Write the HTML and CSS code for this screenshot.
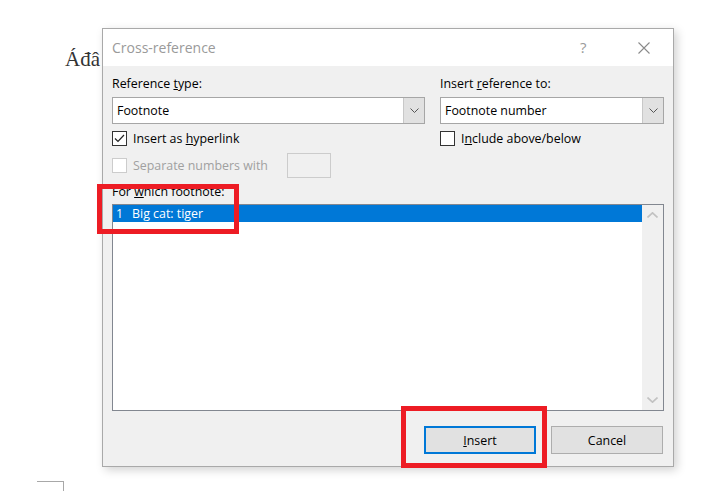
FILE: index.html
```html
<!DOCTYPE html>
<html>
<head>
<meta charset="utf-8">
<link rel="stylesheet" href="styles.css">
</head>
<body>
<div class="page">
  <div class="doc-text">Áđâ</div>
  <div class="margin-mark"></div>
</div>

<div class="dialog">
  <div class="titlebar">
    <span class="title">Cross-reference</span>
    <span class="tb-help">?</span>
    <span class="tb-close"><svg width="12" height="12" viewBox="0 0 12 12"><path d="M0.5 0.5 L11.5 11.5 M11.5 0.5 L0.5 11.5" stroke="#8a8a8a" stroke-width="1.1" fill="none"/></svg></span>
  </div>
  <div class="body">
    <div class="cols">
      <div class="col col-left">
        <div class="label">Reference <u>t</u>ype:</div>
        <div class="combo">
          <span class="combo-text">Footnote</span>
          <span class="combo-btn"><svg width="9" height="5" viewBox="0 0 9 5"><path d="M0.5 0.5 L4.5 4.5 L8.5 0.5" stroke="#555" stroke-width="1" fill="none"/></svg></span>
        </div>
        <div class="check-row">
          <span class="box checked"><svg width="13" height="13" viewBox="0 0 13 13"><path d="M2 6.5 L5 9.5 L11 3" stroke="#222" stroke-width="1.2" fill="none"/></svg></span>
          <span class="check-label">Insert as <u>h</u>yperlink</span>
        </div>
        <div class="check-row sep-row">
          <span class="box disabled"></span>
          <span class="check-label disabled-text">Separate numbers with</span>
          <span class="sep-input"></span>
        </div>
      </div>
      <div class="col col-right">
        <div class="label">Insert <u>r</u>eference to:</div>
        <div class="combo">
          <span class="combo-text">Footnote number</span>
          <span class="combo-btn"><svg width="9" height="5" viewBox="0 0 9 5"><path d="M0.5 0.5 L4.5 4.5 L8.5 0.5" stroke="#555" stroke-width="1" fill="none"/></svg></span>
        </div>
        <div class="check-row">
          <span class="box"></span>
          <span class="check-label">I<u>n</u>clude above/below</span>
        </div>
      </div>
    </div>
    <div class="label list-label">For <u>w</u>hich footnote:</div>
    <div class="listbox">
      <div class="list-items">
        <div class="list-item selected"><span class="item-num">1</span>Big cat: tiger</div>
      </div>
      <div class="scrollbar">
        <svg width="11" height="6" viewBox="0 0 11 6"><path d="M0.5 5.5 L5.5 0.8 L10.5 5.5" stroke="#c2c2c2" stroke-width="1.6" fill="none"/></svg>
        <svg width="11" height="6" viewBox="0 0 11 6"><path d="M0.5 0.5 L5.5 5.2 L10.5 0.5" stroke="#c2c2c2" stroke-width="1.6" fill="none"/></svg>
      </div>
    </div>
    <div class="buttons">
      <button class="btn default"><u>I</u>nsert</button>
      <button class="btn">Cancel</button>
    </div>
  </div>
</div>

<div class="annot annot-list"></div>
<div class="annot annot-insert"></div>
</body>
</html>
```

FILE: styles.css
```css
* { box-sizing: border-box; }
html, body { margin: 0; padding: 0; }
body {
  width: 725px;
  height: 491px;
  overflow: hidden;
  background: #fff;
  position: relative;
  font-family: "Open Sans", "Noto Sans", sans-serif;
}
.page {
  display: flex;
  flex-direction: column;
  height: 491px;
}
.doc-text {
  font-family: "Liberation Serif", serif;
  font-size: 21px;
  color: #333;
  padding: 46px 0 0 65px;
  line-height: 26px;
}
.margin-mark {
  margin-top: auto;
  margin-left: 37px;
  width: 27px;
  height: 10px;
  border-top: 1px solid #a8a8a8;
  border-right: 1px solid #a8a8a8;
}

.dialog {
  position: absolute;
  left: 102px;
  top: 28px;
  width: 572px;
  height: 439px;
  border: 1px solid #a9a9a9;
  background: #f0f0f0;
  box-shadow: 3px 3px 9px rgba(0,0,0,0.18);
  display: flex;
  flex-direction: column;
}
.titlebar {
  height: 37px;
  background: #fff;
  display: flex;
  align-items: center;
  padding-left: 9px;
  flex-shrink: 0;
}
.title {
  font-size: 14px;
  color: #9a9a9a;
  flex: 1;
  padding-bottom: 1px;
}
.tb-help {
  font-size: 15px;
  color: #9a9a9a;
  width: 16px;
  margin-right: 42px;
  padding-bottom: 2px;
}
.tb-close {
  width: 12px;
  height: 12px;
  margin-right: 23px;
  display: flex;
}
.body {
  flex: 1;
  padding: 9px 9px 0 9px;
  display: flex;
  flex-direction: column;
  font-size: 12.4px;
  color: #000;
}
.cols {
  display: flex;
  gap: 15px;
}
.col-left { width: 313px; }
.col-right { width: 224px; }
.label {
  height: 18px;
  line-height: 18px;
  margin-bottom: 4px;
}
.combo {
  height: 27px;
  border: 1px solid #a6a6a6;
  background: #fff;
  display: flex;
  align-items: center;
}
.combo-text {
  flex: 1;
  padding-left: 4px;
}
.combo-btn {
  width: 21px;
  height: 25px;
  background: #e1e1e1;
  border-left: 1px solid #c8c8c8;
  display: flex;
  align-items: center;
  justify-content: center;
}
.check-row {
  display: flex;
  align-items: center;
  height: 18px;
  margin-top: 5px;
}
.box {
  width: 15px;
  height: 15px;
  border: 1px solid #333;
  background: #fff;
  display: flex;
  align-items: center;
  justify-content: center;
  flex-shrink: 0;
}
.box.disabled {
  border-color: #cccccc;
  background: #fff;
}
.check-label {
  margin-left: 6px;
}
.disabled-text { color: #a0a0a0; }
.sep-row {
  height: 25px;
  margin-top: 6px;
}
.sep-input {
  width: 44px;
  height: 25px;
  border: 1px solid #cccccc;
  background: #f0f0f0;
  margin-left: 19px;
}
.list-label {
  margin-top: 5px;
  margin-bottom: 3px;
  height: 18px;
}
.listbox {
  height: 207px;
  border: 1px solid #828790;
  background: #fff;
  display: flex;
}
.list-items {
  flex: 1;
}
.list-item {
  height: 17px;
  line-height: 17px;
  padding-left: 3px;
  display: flex;
}
.item-num {
  width: 16px;
}
.list-item.selected {
  background: #0078d7;
  color: #fff;
}
.scrollbar {
  width: 21px;
  background: #f0f0f0;
  display: flex;
  flex-direction: column;
  justify-content: space-between;
  align-items: center;
  padding: 7px 0 7px;
}
.buttons {
  display: flex;
  justify-content: flex-end;
  gap: 15px;
  margin-top: 15px;
  padding-right: 1px;
}
.btn {
  width: 112px;
  height: 28px;
  background: #e1e1e1;
  border: 1px solid #adadad;
  font-family: "Open Sans", "Noto Sans", sans-serif;
  font-size: 12.4px;
  color: #000;
  padding: 0;
}
.btn.default {
  border: 2px solid #0078d7;
}

.annot {
  position: absolute;
  border: 5px solid #ed1c24;
}
.annot-list {
  left: 97px;
  top: 184px;
  width: 142px;
  height: 50px;
}
.annot-insert {
  left: 401px;
  top: 406px;
  width: 146px;
  height: 62px;
}
```
